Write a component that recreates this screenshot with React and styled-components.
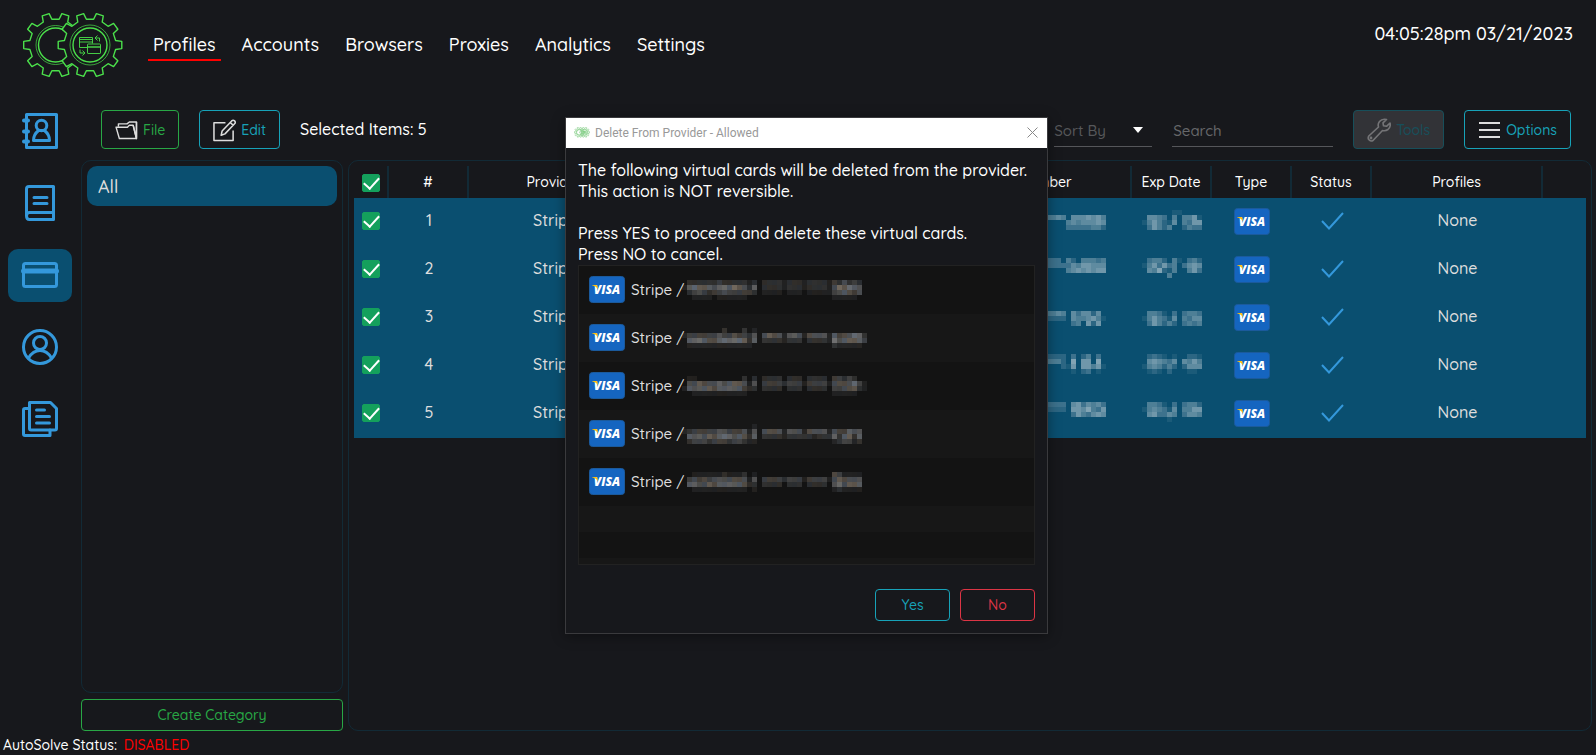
import React, { useState } from "react";
import styled, { createGlobalStyle } from "styled-components";

const cards = [1, 2, 3, 4, 5];
const pages = ["Profiles", "Accounts", "Browsers", "Proxies", "Analytics", "Settings"];

// Masked card details, one digit per cell, 0 is empty and 9 is the brightest
const dialogMasks = [
	[
		"022222232222212022221222122221324232000",
		"156555456565425022221222122221465654000",
		"023432334333332011110111011111345434000",
		"001111011111100000000000000000111110000",
	],
	[
		"000000002000201000000000000000000000000",
		"133333343343324045441454144441534465200",
		"055654456566525022221222022221645555300",
		"011111111111110000000000000000211111000",
	],
	[
		"011000000000202022220222022220332320000",
		"044544454555414033332333133331444463100",
		"154555455555322022220222022220334452100",
		"001111111111100000000000000000111110000",
	],
	[
		"000000000000001000000000000000000000000",
		"123333344333414044441444144441433544000",
		"054545456545425022221222221222525525000",
		"023332333233211000000000000000123312000",
	],
	[
		"001111112111201000000000000000431111000",
		"034343444444414033332333133331454444000",
		"055445455555422022220222022220464555000",
		"001111111111101000000000000000121111000",
	],
];

const numberMasks = [
	["000000000000000000000000", "444404444044445405556564", "000000000000000045455565", "000000000000000033333442"],
	["033330333303333042044434", "033330333303333335466555", "000000000000000045656566", "000000000000000000000000"],
	["000000000000000000000000", "444404444044445405355250", "222202222022222205445641", "000000000000000003406260"],
	["222202222022222203024030", "444404444044444207066070", "000000000000000216066461", "000000000000000001023010"],
	["333303333033333305635453", "222202222022222206657436", "000000000000000003643565", "000000000000000000000000"],
];

const dateMasks = [
	["000000110000", "055430404461", "146421504366", "036424002433"],
	["034420410342", "146363403565", "054721400463", "000004000000"],
	["000000000000", "044310303443", "146431504355", "036424203434"],
	["023210100221", "056543505464", "145424202555", "012102000110"],
	["044310303442", "145431504466", "056335403554", "000001000000"],
];

const tints = ["#9fb0c8", "#c4c4c6", "#b4bcc6", "#cbb9a2", "#b8b8b4", "#a9b6c8", "#c0ac98"];

const Mosaic = ({ rows, tint }) => (
	<MosaicSvg width={rows[0].length * 5} height={rows.length * 5} shapeRendering="crispEdges" aria-hidden="true">
		{rows.map((row, y) =>
			row.split("").map((level, x) =>
				level === "0" ? null : (
					<rect
						key={x + "-" + y}
						x={x * 5}
						y={y * 5}
						width="5"
						height="5"
						fill={tint || tints[(x * 3 + y) % tints.length]}
						opacity={level * 0.085}
					/>
				)
			)
		)}
	</MosaicSvg>
);

const Visa = () => (
	<VisaSvg viewBox="0 0 36 27" role="img" aria-label="Visa">
		<rect x="0.5" y="0.5" width="35" height="26" rx="3" fill="#1565c0" stroke="#1b5a9c" />
		<text x="18" y="18" textAnchor="middle" fontFamily="Open Sans, sans-serif" fontSize="12" fontWeight="800" fontStyle="italic" fill="#fff">
			VISA
		</text>
		<path d="M3 9h4q1 0 1.300 1l.9 3.500C7.800 11.500 6 10 3 9.300z" fill="#ffc107" />
	</VisaSvg>
);

const gearPath = (cx, cy) => {
	const points = [];
	for (let i = 0; i < 10; i++) {
		[[-10, 26], [-6.5, 32], [6.5, 32], [10, 26]].forEach(([offset, r]) => {
			const a = ((i * 36 + offset) * Math.PI) / 180;
			points.push(`${(cx + r * Math.cos(a)).toFixed(2)} ${(cy + r * Math.sin(a)).toFixed(2)}`);
		});
	}
	return `M${points.join("L")}Z`;
};

const Gears = ({ width }) => (
	<svg width={width} viewBox="0 0 102 68" fill="none" stroke="#4be04b" strokeWidth="1.4" strokeLinejoin="round" aria-hidden="true">
		<path d={gearPath(33.5, 34)} />
		<circle cx="33.5" cy="34" r="19.5" strokeWidth="0.7" />
		<circle cx="33.5" cy="34" r="17" />
		<path d={gearPath(68, 34)} fill="#17181c" />
		<circle cx="68" cy="34" r="20" strokeWidth="0.7" />
		<circle cx="68" cy="34" r="17" />
		<g strokeWidth="0.9">
			<path d="M65 36.500h-7.500v-10h13v6" />
			<path d="M57.500 28.500h13M57.500 31h13" />
			<rect x="65.500" y="33" width="13" height="9.500" rx="0.600" fill="#17181c" />
			<path d="M65.500 36h13" strokeWidth="1.4" />
			<path d="M77.500 30.500v-3.500h-4M75.500 24.500l-2.500 2.500 2.500 2.500M58 38.500v3.500h4M60.500 39.500l2.500 2.500-2.500 2.500" />
		</g>
	</svg>
);

const sideIcons = {
	Addresses: (
		<>
			<path d="M4.500 1.500h30v33h-30z" />
			<path d="M2 7.500h4M2 18.500h4M2 28.500h4" strokeWidth="4" />
			<circle cx="19.500" cy="12.500" r="5.300" />
			<path d="M11.500 27.500c0-4.500 2.500-8 5-10h6c2.500 2 5 5.500 5 10z" />
		</>
	),
	Books: (
		<>
			<path d="M31.500 27.500h-24c-4 0-4 7 0 7h24M4.500 31V4q0-2.500 2.500-2.500h24.500v33" />
			<path d="M12 12.500h13M12 18.500h13" />
		</>
	),
	Cards: (
		<>
			<rect x="1.500" y="6.500" width="33" height="23" rx="2" />
			<path d="M1.500 14h33" strokeWidth="5" />
		</>
	),
	Users: (
		<>
			<circle cx="18" cy="18" r="16.500" />
			<circle cx="18" cy="14" r="6.500" />
			<path d="M6.500 29c3-5 7-7.500 11.500-7.500S26.500 24 29.500 29" />
		</>
	),
	Documents: (
		<>
			<path d="M7.500 1.500h21l6 6v20q0 1.500-1.500 1.500H9q-1.500 0-1.500-1.500z" />
			<path d="M7.500 7.500H3q-1.500 0-1.500 1.500v24q0 1.500 1.500 1.500h25V29" />
			<path d="M14.500 9h8M14.500 15.500h13M14.500 22h13" />
		</>
	),
};

const Tick = () => (
	<svg width="23" height="18" viewBox="0 0 23 18" fill="none" stroke="#3498db" strokeWidth="2" role="img" aria-label="Active">
		<path d="M1 9l7 7.500L22 1" />
	</svg>
);

const App = () => {
	const [checked, setChecked] = useState(cards);

	const toggle = (n) => setChecked(checked.includes(n) ? checked.filter((c) => c !== n) : [...checked, n]);

	return (
		<Page>
			<GlobalStyle />
			<Header>
				<Gears width={102} />
				<Nav>
					{pages.map((page) => (
						<NavLink key={page} href="#" $active={page === "Profiles"}>
							{page}
						</NavLink>
					))}
				</Nav>
				<Clock>04:05:28pm 03/21/2023</Clock>
			</Header>
			<Body>
				<Sidebar>
					{Object.keys(sideIcons).map((name) => (
						<SideButton key={name} aria-label={name} $active={name === "Cards"}>
							<svg width="36" height="36" viewBox="0 0 36 36" fill="none" stroke="#3498db" strokeWidth="3" strokeLinecap="round" strokeLinejoin="round">
								{sideIcons[name]}
							</svg>
						</SideButton>
					))}
				</Sidebar>
				<Content>
					<Toolbar>
						<ToolButton $color="#28a745">
							<svg width="23" height="19" viewBox="0 0 24 20" fill="none" stroke="#ddd" strokeWidth="1.500" strokeLinejoin="round">
								<path d="M3.500 6V3h9l2.500-2h7.500v16.500" />
								<path d="M1 6.500h12l2-2h4l3.500 14h-18z" />
								<path d="M19 4.500l3.500 14V1" />
							</svg>
							File
						</ToolButton>
						<ToolButton $color="#17a2b8">
							<svg width="23" height="23" viewBox="0 0 24 24" fill="none" stroke="#ddd" strokeWidth="1.600" strokeLinejoin="round">
								<path d="M13 4H1v18.500h20V12" />
								<path d="M8.500 17l1-4.500L19.500 2q1.500-1.500 3 0t0 3L12.500 15.500zM18 3.500l3 3" />
							</svg>
							Edit
						</ToolButton>
						<Selected>Selected Items: {checked.length}</Selected>
						<SortBox>
							<SortSelect aria-label="Sort By">
								<option>Sort By</option>
							</SortSelect>
							<svg width="10" height="6" aria-hidden="true">
								<path d="M0 0h10l-5 6z" fill="#fff" />
							</svg>
						</SortBox>
						<Search aria-label="Search" placeholder="Search" />
						<ToolButton $color="#17a2b8" disabled>
							<svg width="24" height="24" viewBox="0 0 24 24" fill="none" stroke="#fff" strokeWidth="1.600" strokeLinejoin="round">
								<path d="M19.500 1.500l-3.500 3.300.5 3 3 .5L23 5q1 4-2 6.500-2.500 1.800-5.500 1L6 22.500q-2 1.200-3.800-.5T1.800 18L11.500 9q-1-3 1-5.500 2.500-3 7-2z" />
								<circle cx="4" cy="20" r="0.600" />
							</svg>
							Tools
						</ToolButton>
						<ToolButton $color="#17a2b8">
							<svg width="23" height="16" viewBox="0 0 23 16" stroke="#ddd" strokeWidth="2">
								<path d="M1 1h21M1 8h21M1 15h21" />
							</svg>
							Options
						</ToolButton>
					</Toolbar>
					<Panels>
						<Categories>
							<CategoryList>
								<Category>All</Category>
							</CategoryList>
							<OutlineButton $color="#28a745">Create Category</OutlineButton>
						</Categories>
						<TablePanel>
							<Table>
								<colgroup>
									<col width="35" />
									<col width="80" />
									<col width="172" />
									<col />
									<col width="172" />
									<col width="80" />
									<col width="80" />
									<col width="80" />
									<col width="171" />
									<col width="43" />
								</colgroup>
								<thead>
									<tr>
										<th>
											<Check
												type="checkbox"
												aria-label="Select all"
												checked={checked.length === cards.length}
												onChange={() => setChecked(checked.length === cards.length ? [] : cards)}
											/>
										</th>
										<th>#</th>
										<th>Provider</th>
										<th />
										<th>Number</th>
										<th>Exp Date</th>
										<th>Type</th>
										<th>Status</th>
										<th>Profiles</th>
										<th />
									</tr>
								</thead>
								<tbody>
									{cards.map((n, i) => (
										<Row key={n} $selected={checked.includes(n)}>
											<td>
												<Check type="checkbox" aria-label={"Select card " + n} checked={checked.includes(n)} onChange={() => toggle(n)} />
											</td>
											<td>{n}</td>
											<td>Stripe</td>
											<td />
											<td>
												<Mosaic rows={numberMasks[i]} tint="#d4dde2" />
											</td>
											<td>
												<Mosaic rows={dateMasks[i]} tint="#d4dde2" />
											</td>
											<td>
												<Visa />
											</td>
											<td>
												<Tick />
											</td>
											<td>None</td>
											<td />
										</Row>
									))}
								</tbody>
							</Table>
						</TablePanel>
					</Panels>
				</Content>
			</Body>
			<StatusBar>
				AutoSolve Status: <Disabled>DISABLED</Disabled>
			</StatusBar>
			<Dialog role="dialog" aria-label="Delete From Provider - Allowed">
				<TitleBar>
					<TitleIcon>
						<Gears width={16} />
					</TitleIcon>
					<span>Delete From Provider - Allowed</span>
					<CloseButton aria-label="Close">
						<svg width="11" height="11" viewBox="0 0 11 11" stroke="#888" strokeWidth="1">
							<path d="M0.500 0.500l10 10M10.500 0.500l-10 10" />
						</svg>
					</CloseButton>
				</TitleBar>
				<DialogBody>
					<p>
						The following virtual cards will be deleted from the provider.
						<br />
						This action is NOT reversible.
					</p>
					<p>
						Press YES to proceed and delete these virtual cards.
						<br />
						Press NO to cancel.
					</p>
					<CardList>
						{cards.map((n, i) => (
							<CardItem key={n}>
								<Visa />
								<CardName>Stripe /</CardName>
								<Mosaic rows={dialogMasks[i]} />
							</CardItem>
						))}
						<EmptyItem />
						<EmptyItem />
					</CardList>
					<Buttons>
						<OutlineButton $color="#17a2b8">Yes</OutlineButton>
						<OutlineButton $color="#dc3545">No</OutlineButton>
					</Buttons>
				</DialogBody>
			</Dialog>
		</Page>
	);
};

export default App;

const GlobalStyle = createGlobalStyle`
	* {
		box-sizing: border-box;
	}
	body {
		margin: 0;
		background: #17181c;
		color: #fff;
		font-family: Quicksand, Lato, sans-serif;
		font-size: 16px;
		font-weight: 500;
	}
	button, input, select {
		font-family: inherit;
		font-size: 14px;
		font-weight: 500;
	}
	p {
		margin: 0;
	}
`;

const Page = styled.div`
	min-height: 100vh;
	display: flex;
	flex-direction: column;
`;

const Header = styled.header`
	display: flex;
	align-items: flex-start;
	height: 99px;
	padding: 11px 23px 0 22px;
`;

const Nav = styled.nav`
	display: flex;
	gap: 16px;
	margin: 17px 0 0 24px;
`;

const NavLink = styled.a`
	padding: 6px 5px 3px;
	border-bottom: 2px solid ${(props) => (props.$active ? "#f00" : "transparent")};
	color: #fff;
	font-size: 18px;
	line-height: 22px;
	text-decoration: none;
`;

const Clock = styled.div`
	margin: 12px 0 0 auto;
	font-size: 18px;
	line-height: 22px;
`;

const Body = styled.div`
	flex: 1;
	display: flex;
	padding: 0 4px 0 8px;
`;

const Sidebar = styled.aside`
	display: flex;
	flex-direction: column;
	gap: 19px;
	padding-top: 6px;
	margin-right: 9px;
`;

const SideButton = styled.button`
	display: flex;
	justify-content: center;
	width: 64px;
	height: 53px;
	padding: 8px 0;
	border: none;
	border-radius: 10px;
	background: ${(props) => (props.$active ? "#0a4f70" : "none")};
	svg {
		overflow: visible;
	}
`;

const Content = styled.main`
	flex: 1;
	display: flex;
	flex-direction: column;
`;

const Toolbar = styled.div`
	display: flex;
	align-items: center;
	gap: 20px;
	height: 61px;
	padding: 0 21px 0 20px;
`;

const ToolButton = styled.button`
	display: flex;
	align-items: center;
	gap: 5px;
	height: 39px;
	padding: 1px 13px 0;
	border: 1px solid ${(props) => props.$color};
	border-radius: 4px;
	background: none;
	color: ${(props) => props.$color};
	&:disabled {
		background: #5c5c60;
		opacity: 0.4;
	}
`;

const Selected = styled.div`
	margin-right: auto;
	padding-bottom: 1px;
`;

const SortBox = styled.div`
	display: flex;
	align-items: center;
	width: 98px;
	height: 35px;
	padding: 2px 9px 0 0;
	border-bottom: 1px solid #55565a;
`;

const SortSelect = styled.select`
	flex: 1;
	padding: 0;
	border: none;
	appearance: none;
	background: none;
	color: #56575a;
	font-size: 15px;
`;

const Search = styled.input`
	width: 161px;
	height: 35px;
	padding: 2px 1px 0;
	border: none;
	border-bottom: 1px solid #55565a;
	background: none;
	color: #fff;
	font-size: 15px;
	&::placeholder {
		color: #66676a;
	}
`;

const Panels = styled.div`
	flex: 1;
	display: grid;
	grid-template-columns: 262px 1fr;
	gap: 5px;
`;

const Categories = styled.div`
	display: flex;
	flex-direction: column;
	gap: 6px;
`;

const CategoryList = styled.div`
	flex: 1;
	padding: 5px;
	border: 1px solid #122a36;
	border-radius: 10px;
`;

const Category = styled.button`
	width: 100%;
	height: 40px;
	padding: 0 11px;
	border: none;
	border-radius: 10px;
	background: #0a4f70;
	color: #ddd;
	font-size: 18px;
	text-align: left;
`;

const OutlineButton = styled.button`
	height: 32px;
	padding: 0 0 1px;
	border: 1px solid ${(props) => props.$color};
	border-radius: 4px;
	background: none;
	color: ${(props) => props.$color};
`;

const TablePanel = styled.div`
	padding: 5px;
	border: 1px solid #122a36;
	border-radius: 10px;
`;

const Table = styled.table`
	width: 100%;
	table-layout: fixed;
	border-collapse: separate;
	border-spacing: 0;
	text-align: center;
	th {
		height: 32px;
		padding: 0;
		border-right: 2px solid #122a36;
		font-size: 14px;
		font-weight: 500;
	}
	th:last-child {
		border: none;
	}
	td {
		height: 48px;
		padding: 0 0 5px;
	}
	svg {
		display: block;
		margin: 3px auto 0;
	}
`;

const Row = styled.tr`
	background: ${(props) => (props.$selected ? "#0a4f70" : "none")};
	color: #ddd;
	font-size: 16px;
`;

const Check = styled.input`
	display: block;
	width: 18px;
	height: 18px;
	margin: 3px 0 0 8px;
	appearance: none;
	border: 1px solid #14a05c;
	border-radius: 2px;
	th & {
		margin-top: 1px;
	}
	&:checked {
		background: #14a05c;
	}
	&:checked::after {
		content: "";
		display: block;
		width: 7px;
		height: 13px;
		margin: -1px auto 0;
		border: solid #fff;
		border-width: 0 2px 2px 0;
		transform: rotate(42deg);
	}
`;

const StatusBar = styled.footer`
	height: 24px;
	padding: 0 3px;
	font-size: 14px;
	line-height: 28px;
`;

const Disabled = styled.span`
	margin-left: 3px;
	color: #f00;
`;

const MosaicSvg = styled.svg`
	flex: none;
	td && {
		margin: 0 auto;
	}
`;

const VisaSvg = styled.svg`
	flex: none;
	width: 36px;
	height: 27px;
`;

const Dialog = styled.section`
	position: absolute;
	top: 117px;
	left: calc(50% - 233px);
	width: 483px;
	border: 1px solid #3a3a3d;
	background: #17181c;
	box-shadow: 0 2px 12px rgba(0, 0, 0, 0.4);
`;

const TitleBar = styled.div`
	display: flex;
	align-items: center;
	height: 30px;
	padding: 0 9px 1px 8px;
	gap: 5px;
	background: #fff;
	color: #999;
	font-family: Roboto, sans-serif;
	font-size: 12px;
	font-weight: 400;
`;

const TitleIcon = styled.span`
	display: flex;
	opacity: 0.7;
	svg * {
		fill: none;
		stroke: #4cb850;
		stroke-width: 4px;
	}
`;

const CloseButton = styled.button`
	display: flex;
	margin-left: auto;
	padding: 0;
	border: none;
	background: none;
`;

const DialogBody = styled.div`
	padding: 12px;
	line-height: 21px;
	p + p {
		margin-top: 21px;
	}
`;

const CardList = styled.ul`
	height: 300px;
	margin: 0;
	padding: 0;
	overflow: hidden;
	border: 1px solid #222;
	background: #171717;
	list-style: none;
`;

const CardItem = styled.li`
	display: flex;
	align-items: center;
	height: 48px;
	padding: 0 0 1px 10px;
	color: #ddd;
	font-size: 15px;
	&:nth-child(odd) {
		background: #131313;
	}
`;

const CardName = styled.span`
	width: 51px;
	margin: 0 0 0 6px;
	white-space: nowrap;
`;

const EmptyItem = styled.li`
	height: 26px;
	&:nth-child(odd) {
		background: #131313;
	}
`;

const Buttons = styled.div`
	display: flex;
	justify-content: flex-end;
	gap: 10px;
	margin-top: 24px;
	button {
		width: 75px;
	}
`;
